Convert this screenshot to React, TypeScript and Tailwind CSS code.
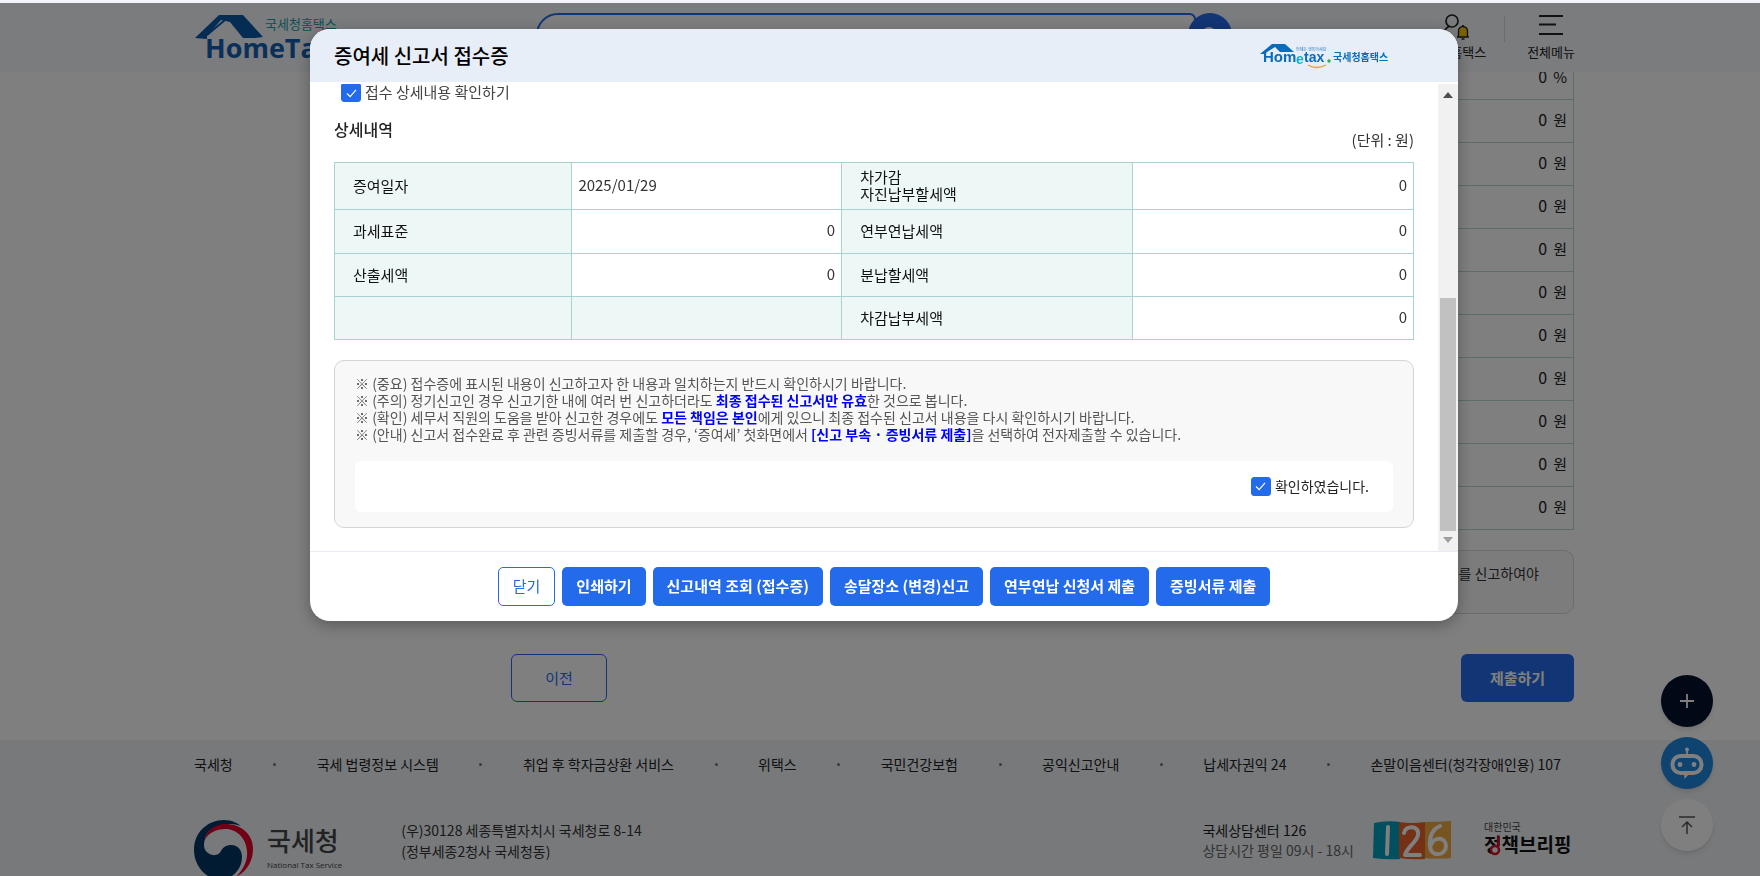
import React, { useState } from 'react';
import { clsx } from 'clsx';

const FOOTER_LINKS = [
  '국세청',
  '국세 법령정보 시스템',
  '취업 후 학자금상환 서비스',
  '위택스',
  '국민건강보험',
  '공익신고안내',
  '납세자권익 24',
  '손말이음센터(청각장애인용) 107',
];

const AMOUNT_ROWS = ['%', '원', '원', '원', '원', '원', '원', '원', '원', '원', '원'];

const MODAL_ACTIONS = [
  '인쇄하기',
  '신고내역 조회 (접수증)',
  '송달장소 (변경)신고',
  '연부연납 신청서 제출',
  '증빙서류 제출',
];

const CheckBox = ({
  id,
  label,
  className,
  boxClassName,
}: {
  id: string;
  label: string;
  className?: string;
  boxClassName?: string;
}) => {
  const [checked, setChecked] = useState(true);

  return (
    <div className={clsx('flex items-center gap-1', className)}>
      <span className="grid place-items-center">
        <input
          id={id}
          type="checkbox"
          checked={checked}
          onChange={(e) => setChecked(e.target.checked)}
          className={clsx(
            'col-start-1 row-start-1 w-5 appearance-none border border-[#246beb] bg-white checked:bg-[#246beb]',
            boxClassName
          )}
        />
        <svg viewBox="0 0 12 10" className="pointer-events-none col-start-1 row-start-1 h-[9px] w-[11px]">
          <path d="M1 5l3.5 3.6L11 1" fill="none" stroke="#fff" strokeWidth="1.3" />
        </svg>
      </span>
      <label htmlFor={id} className="pb-[2px]">
        {label}
      </label>
    </div>
  );
};

const HomeTaxLogo = () => (
  <svg viewBox="0 0 150 50" className="h-[50px] w-[150px]" role="img" aria-label="국세청홈택스">
    <path d="M1 26L25 3h24l20 22-8 1H49L36 10 27 8 13 24v3z" fill="#0a5aa8" />
    <path d="M13 23L31 8" stroke="#0a5aa8" strokeWidth="2" />
    <text x="71" y="17" fontSize="13" fill="#18a0a8" fontFamily="Noto Sans CJK KR, sans-serif">
      국세청홈택스
    </text>
    <text x="11" y="46" fontSize="27" fontWeight="700" fill="#1560b4" fontFamily="Open Sans, sans-serif">
      HomeTax
    </text>
  </svg>
);

const ModalLogo = () => (
  <svg viewBox="0 0 132 28" className="h-7 w-[132px]" role="img" aria-label="Hometax 국세청홈택스">
    <path d="M0 12L12 2h13l9 8h-14l-5-5L4 12z" fill="#0b6db8" />
    <path d="M4 11l10-8" stroke="#0b6db8" strokeWidth="1.5" />
    <text x="36" y="9" fontSize="4" fill="#2a80c0" fontFamily="Noto Sans CJK KR, sans-serif">
      언제든 행복하세요
    </text>
    <g fontFamily="Liberation Sans, sans-serif" fontWeight="700" fontSize="15" fill="#0b6db8">
      <text x="3" y="20">Hom</text>
      <text x="36" y="22" fontSize="14" fill="#10b0d0">e</text>
      <text x="44" y="20" fontSize="14">tax</text>
    </g>
    <circle cx="69" cy="19" r="1.7" fill="#22b24c" />
    <path d="M48 23q8 5 18 0" fill="none" stroke="#e8a33a" strokeWidth="1.3" />
    <text x="73" y="19" fontSize="10" fontWeight="700" fill="#0b6db8" fontFamily="Noto Sans CJK KR, sans-serif">
      국세청홈택스
    </text>
  </svg>
);

const Header = () => (
  <header className="relative z-10 h-[69px] bg-[#f5f8fc] pl-2">
    <div className="mx-auto flex max-w-[1380px] items-start">
      <a href="#home" className="pt-[9px]">
        <HomeTaxLogo />
      </a>
      <div className="mt-[10px] ml-[192px] flex">
        <input
          type="text"
          aria-label="검색어"
          className="h-11 w-[660px] rounded-l-[28px] rounded-r-lg border-2 border-[#246beb] bg-white px-6"
        />
        <button
          type="button"
          aria-label="검색"
          className="-ml-2 flex size-11 items-center justify-center rounded-full bg-[#246beb]"
        >
          <svg viewBox="0 0 20 20" className="size-5" fill="none" stroke="#fff" strokeWidth="2">
            <circle cx="9" cy="9" r="6" />
            <path d="M13.5 13.5L18 18" />
          </svg>
        </button>
      </div>
      <nav className="ml-auto flex items-start text-[13px] leading-5 text-[#222]">
        <button type="button" className="flex flex-col items-center pt-[9px]">
          <svg viewBox="0 0 28 28" className="size-7" fill="none" stroke="#222" strokeWidth="1.7">
            <circle cx="10" cy="9" r="6" />
            <path d="M2 21c1-4 3-6 6-7" />
            <path d="M15 25h12M16.500 25v-6a4.500 4.500 0 0 1 9 0v6z" fill="#f5c800" strokeWidth="1.400" />
            <path d="M21 13v2M19.500 27h3" />
          </svg>
          <span className="mt-[2px]">나의홈택스</span>
        </button>
        <span className="mt-[13px] mr-[22px] ml-[18px] h-[26px] w-px bg-[#d5d9e0]" />
        <button type="button" className="-mr-px flex flex-col items-center pt-[9px]">
          <svg viewBox="0 0 28 28" className="size-7" stroke="#222" strokeWidth="2">
            <path d="M2 4h24M2 12.500h17M2 22h24" />
          </svg>
          <span className="mt-[2px]">전체메뉴</span>
        </button>
      </nav>
    </div>
  </header>
);

const PageContent = () => (
  <main className="-mt-4 pl-2">
    <div className="mx-auto max-w-[1380px] pl-[317px]">
      <table className="w-full border-collapse border border-[#b8dcd8] text-base text-[#222]">
        <tbody>
          {AMOUNT_ROWS.map((unit, i) => (
            <tr key={i} className="h-[43px] border-b border-[#b8dcd8]">
              <td className="pr-[6px] pb-1 text-right">
                <span className="mr-[6px]">0</span>
                <span className="text-[15px]">{unit}</span>
              </td>
            </tr>
          ))}
        </tbody>
      </table>
      <div className="mt-5 h-16 rounded-[10px] border border-[#d8d8d8] bg-[#f8f8f8] pt-3 pr-[34px] text-right text-sm text-[#333]">
        증여세를 신고하여야
      </div>
      <div className="mt-10 flex justify-between text-[15px]">
        <button type="button" className="h-12 w-24 rounded-md border border-[#246beb] bg-white text-[#246beb]">
          이전
        </button>
        <button type="button" className="h-12 w-[113px] rounded-md bg-[#246beb] font-bold text-white">
          제출하기
        </button>
      </div>
    </div>
  </main>
);

const Footer = () => (
  <footer className="mt-[38px] bg-[#eff2f7] pt-[14px] pb-10 pl-2 text-sm text-[#222]">
    <div className="mx-auto max-w-[1380px]">
      <ul className="flex items-center justify-between pr-[13px]">
        {FOOTER_LINKS.map((link, i) => (
          <React.Fragment key={link}>
            {i > 0 && <li aria-hidden className="size-[3px] rounded-full bg-[#777]" />}
            <li>
              <a href="#link">{link}</a>
            </li>
          </React.Fragment>
        ))}
      </ul>
      <div className="mt-[46px] flex items-start">
        <svg viewBox="0 0 60 60" className="size-[60px]">
          <path
            d="M0 30C0 12 14 0 30 0c8 0 13 3 17 6-6-2-12-3-17-1-11 1-18 7-19 14-2 6-1 11 3 14 6 4 11 2 13-2 2-4 6-6 10-6 7 0 11 5 11 12 0 11-8 21-20 23C12 60 0 46 0 30z"
            fill="#003764"
          />
          <path
            d="M11 20C12 11 20 4 31 4c16 0 28 10 28 25 0 13-7 23-17 28 7-7 12-16 11-26C52 17 42 9 31 9c-9 0-17 4-20 11z"
            fill="#e4002b"
          />
        </svg>
        <div className="ml-[13px] flex flex-col text-[#444]">
          <span className="text-[26px] leading-10 font-medium">국세청</span>
          <span className="font-['Open_Sans'] text-[8px] leading-[10px] font-medium">National Tax Service</span>
        </div>
        <address className="ml-[59px] leading-[21px] text-[#333] not-italic">
          (우)30128 세종특별자치시 국세청로 8-14
          <br />
          (정부세종2청사 국세청동)
        </address>
        <div className="ml-auto leading-5">
          <p>국세상담센터 126</p>
          <p className="text-[#666]">상담시간 평일 09시 - 18시</p>
        </div>
        <svg viewBox="0 0 79 40" className="ml-[19px] h-10 w-[79px]" role="img" aria-label="126">
          <path d="M1 3Q14 0 27 2v37Q14 40 0 38z" fill="#00a0c0" />
          <path d="M26 2q13 2 26 0v37q-13 1-26-1z" fill="#e8622a" />
          <path d="M52 2q13 0 26-1v37q-13 1-26 0z" fill="#f0a840" />
          <g fill="none" stroke="#fff" strokeWidth="4" strokeLinecap="round" strokeLinejoin="round">
            <path d="M15 7l-1 27" />
            <path d="M31 13c1-8 16-8 14 2-1 7-11 12-13 20h15" />
            <path d="M67 6c-8 3-11 12-10 20 1 12 16 10 16 0 0-9-12-10-15-1" />
          </g>
        </svg>
        <svg viewBox="0 0 90 40" className="ml-[32px] h-10 w-[90px]" role="img" aria-label="정책브리핑">
          <g fontFamily="Noto Sans CJK KR, sans-serif">
            <text x="0" y="11" fontSize="10" fill="#444">
              대한민국
            </text>
            <text x="0" y="32" fontSize="19" fontWeight="700" fill="#111">
              정책브리핑
            </text>
          </g>
          <path d="M14.500 16v10" stroke="#d8102a" strokeWidth="2.500" />
          <circle cx="11" cy="30" r="4" fill="#eff2f7" stroke="#d8102a" strokeWidth="2.500" />
        </svg>
      </div>
    </div>
  </footer>
);

const FloatingButtons = () => (
  <div className="fixed top-[675px] right-[47px] z-10 flex flex-col gap-[10px]">
    <button type="button" aria-label="더보기" className="flex size-[52px] items-center justify-center rounded-full bg-[#04122c] shadow-md">
      <svg viewBox="0 0 16 16" className="size-4" stroke="#fff" strokeWidth="1.800">
        <path d="M8 1v14M1 8h14" />
      </svg>
    </button>
    <button type="button" aria-label="챗봇" className="flex size-[52px] items-center justify-center rounded-full bg-[#1f86e0] shadow-md">
      <svg viewBox="0 0 34 34" className="size-[34px]" fill="none" stroke="#fff">
        <rect x="2.500" y="10" width="29" height="17" rx="8" strokeWidth="4" />
        <path d="M17 4v5" strokeWidth="1.800" />
        <circle cx="17" cy="3.500" r="2" fill="#fff" stroke="none" />
        <circle cx="10" cy="18.500" r="2.400" fill="#fff" stroke="none" />
        <circle cx="24" cy="18.500" r="2.400" fill="#fff" stroke="none" />
        <path d="M14 28h5l-4.500 5z" fill="#fff" stroke="none" />
      </svg>
    </button>
    <button type="button" aria-label="맨 위로" className="flex size-[52px] items-center justify-center rounded-full bg-white shadow-md">
      <svg viewBox="0 0 18 20" className="h-5 w-[18px]" fill="none" stroke="#555" strokeWidth="1.500">
        <path d="M1 2h16M9 19V7M4 12l5-5 5 5" />
      </svg>
    </button>
  </div>
);

const Th = ({ children }: { children?: React.ReactNode }) => (
  <th scope="row" className="border border-[#a9d3d3] bg-[#edf8f6] pb-[2px] pl-[18px] text-left leading-[17px] font-normal text-[#111]">
    {children}
  </th>
);

const Td = ({ children }: { children?: React.ReactNode }) => (
  <td className="border border-[#a9d3d3] px-[6px] pb-[2px] text-right">{children}</td>
);

const DetailTable = () => (
  <table className="w-full table-fixed border-collapse text-[15px] text-[#333]">
    <colgroup>
      <col className="w-[22%]" />
      <col className="w-[25%]" />
      <col className="w-[27%]" />
      <col className="w-[26%]" />
    </colgroup>
    <tbody>
      <tr className="h-[47px]">
        <Th>증여일자</Th>
        <td className="border border-[#a9d3d3] px-[6px] pb-[2px]">2025/01/29</td>
        <Th>
          차가감
          <br />
          자진납부할세액
        </Th>
        <Td>0</Td>
      </tr>
      <tr className="h-11">
        <Th>과세표준</Th>
        <Td>0</Td>
        <Th>연부연납세액</Th>
        <Td>0</Td>
      </tr>
      <tr className="h-[43px]">
        <Th>산출세액</Th>
        <Td>0</Td>
        <Th>분납할세액</Th>
        <Td>0</Td>
      </tr>
      <tr className="h-[43px]">
        <Th />
        <td className="border border-[#a9d3d3] bg-[#edf8f6]" />
        <Th>차감납부세액</Th>
        <Td>0</Td>
      </tr>
    </tbody>
  </table>
);

const Em = ({ children }: { children: React.ReactNode }) => (
  <strong className="font-bold text-[#0000ff]">{children}</strong>
);

const Notice = () => (
  <div className="mt-5 rounded-[10px] border border-[#d4d4d4] bg-[#f8f8f8] px-5 pt-[14px] pb-[15px]">
    <ul className="text-sm leading-[17px] text-[#555]">
      <li>※ (중요) 접수증에 표시된 내용이 신고하고자 한 내용과 일치하는지 반드시 확인하시기 바랍니다.</li>
      <li>
        ※ (주의) 정기신고인 경우 신고기한 내에 여러 번 신고하더라도 <Em>최종 접수된 신고서만 유효</Em>한 것으로 봅니다.
      </li>
      <li>
        ※ (확인) 세무서 직원의 도움을 받아 신고한 경우에도 <Em>모든 책임은 본인</Em>에게 있으니 최종 접수된 신고서 내용을 다시 확인하시기 바랍니다.
      </li>
      <li>
        ※ (안내) 신고서 접수완료 후 관련 증빙서류를 제출할 경우, ‘증여세’ 첫화면에서 <Em>[신고 부속 · 증빙서류 제출]</Em>을 선택하여 전자제출할 수 있습니다.
      </li>
    </ul>
    <div className="mt-[18px] flex h-[51px] items-center justify-end rounded-md bg-white pr-6">
      <CheckBox id="confirm" label="확인하였습니다." className="text-sm text-[#222]" boxClassName="h-[19px] rounded-[3px]" />
    </div>
  </div>
);

const ReceiptModal = () => (
  <section
    role="dialog"
    aria-label="증여세 신고서 접수증"
    className="mt-[26px] flex w-full max-w-[1148px] flex-col overflow-hidden rounded-[20px] bg-white shadow-[0_4px_16px_rgba(0,0,0,0.3)]"
  >
    <div className="flex h-[53px] items-center justify-between bg-[#e8eef8] pr-[66px] pl-6">
      <h2 className="text-xl font-medium text-black">증여세 신고서 접수증</h2>
      <ModalLogo />
    </div>
    <div className="flex">
      <div className="flex-1 px-6 pt-[2px] pb-[23px]">
        <CheckBox
          id="detail"
          label="접수 상세내용 확인하기"
          className="h-[18px] pl-[7px] text-[15px] text-[#444]"
          boxClassName="h-[18px] rounded-t-[1px] rounded-b-[3px]"
        />
        <div className="mt-[15px] flex h-[45px] items-start justify-between">
          <h3 className="text-base font-medium text-[#222]">상세내역</h3>
          <span className="self-end pb-[11px] text-[15px] text-[#333]">(단위 : 원)</span>
        </div>
        <DetailTable />
        <Notice />
      </div>
      <div className="mt-[2px] flex w-5 flex-col items-center justify-between bg-[#f1f1f1]">
        <svg viewBox="0 0 10 6" className="mt-2 h-[6px] w-[10px]">
          <path d="M0 6l5-6 5 6z" fill="#505050" />
        </svg>
        <div className="mt-auto h-[233px] w-4 bg-[#c1c1c1]" />
        <svg viewBox="0 0 10 6" className="mt-[6px] mb-2 h-[6px] w-[10px]">
          <path d="M0 0l5 6 5-6z" fill="#a0a0a0" />
        </svg>
      </div>
    </div>
    <div className="flex justify-center gap-[7px] border-t border-[#e6ebf4] py-[15px] text-[15px]">
      <button type="button" className="h-[39px] rounded-[5px] border border-[#246beb] bg-white px-[14px] text-[#246beb]">
        닫기
      </button>
      {MODAL_ACTIONS.map((label) => (
        <button key={label} type="button" className="h-[39px] rounded-[5px] bg-[#246beb] px-[14px] font-bold text-white">
          {label}
        </button>
      ))}
    </div>
  </section>
);

export default function App() {
  return (
    <div className="h-screen overflow-hidden bg-white font-['Noto_Sans_CJK_KR',sans-serif]">
      <div className="h-[3px] bg-[#f2f5f9]" />
      <Header />
      <PageContent />
      <Footer />
      <FloatingButtons />
      <div className="fixed inset-x-0 top-[3px] bottom-0 z-20 flex items-start justify-center bg-black/50 pl-2">
        <ReceiptModal />
      </div>
    </div>
  );
}
